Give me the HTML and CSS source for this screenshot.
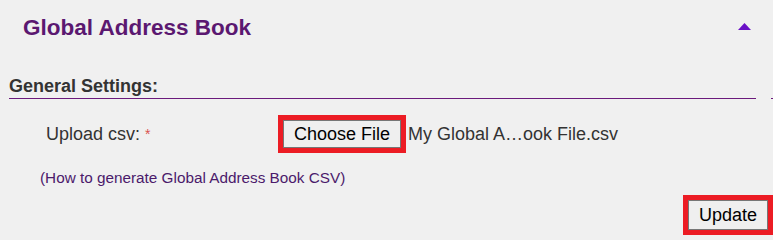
FILE: index.html
```html
<!DOCTYPE html>
<html lang="en">
<head>
    <meta charset="UTF-8">
    <meta name="viewport" content="width=device-width, initial-scale=1.0">
    <title>Global Address Book</title>
    <link rel="stylesheet" href="styles.css">
</head>
<body>
    <div class="panel-head">
        <h1 class="panel-title">Global Address Book</h1>
        <svg class="toggle" width="13" height="7" viewBox="0 0 13 7">
            <polygon points="6.5,0 13,7 0,7" fill="#6a10c6"/>
        </svg>
    </div>

    <div class="section">
        <h2 class="section-title">General Settings:</h2>
        <span class="line-stub"></span>
    </div>

    <div class="form-row">
        <label class="field-label">Upload csv: <span class="req">*</span></label>
        <button class="btn marked">Choose File</button>
        <span class="file-name">My Global A…ook File.csv</span>
    </div>

    <div class="help">
        <a href="#">(How to generate Global Address Book CSV)</a>
    </div>

    <div class="actions">
        <button class="btn marked">Update</button>
    </div>
</body>
</html>
```

FILE: styles.css
```css
html, body{
    margin:0;
    padding:0;
    height:240px;
    overflow:hidden;
}
body{
    background:#f0f0f0;
    font-family:"Liberation Sans", Arial, sans-serif;
    color:#333;
}
.panel-head{
    display:flex;
    justify-content:space-between;
    align-items:flex-start;
    padding:15px 22px 35px 23px;
}
.panel-title{
    margin:0;
    font-size:22.5px;
    line-height:26px;
    font-weight:bold;
    color:#5b1870;
}
.toggle{
    margin-top:8px;
    display:block;
}
.section{
    display:flex;
    align-items:flex-end;
    padding-left:9px;
}
.section-title{
    flex:1;
    margin:0;
    font-size:18px;
    line-height:20px;
    font-weight:bold;
    color:#333;
    padding-bottom:2px;
    border-bottom:1px solid #6b1a7c;
}
.line-stub{
    width:2px;
    margin-left:15px;
    border-bottom:1px solid #6b1a7c;
}
.form-row{
    display:flex;
    align-items:center;
    margin-top:21px;
}
.field-label{
    width:237px;
    padding-left:46px;
    font-size:18px;
    line-height:20px;
}
.req{
    color:#d9534f;
    font-size:14px;
    vertical-align:top;
}
.btn{
    font-family:"Liberation Sans", Arial, sans-serif;
    font-size:18px;
    line-height:20px;
    color:#000;
    background:#efefef;
    border:1px solid #767676;
    border-radius:0;
    padding:3px 10px;
}
.marked{
    outline:5px solid #ec1c24;
}
.file-name{
    margin-left:7px;
    font-size:18px;
    line-height:20px;
}
.help{
    margin-top:21px;
    padding-left:40px;
    font-size:15.3px;
    line-height:18px;
}
.help a{
    color:#4b1a6b;
    text-decoration:none;
}
.actions{
    display:flex;
    justify-content:flex-end;
    margin-top:13px;
    padding-right:5px;
}
.actions .btn{
    padding:4px 10px;
}
```
